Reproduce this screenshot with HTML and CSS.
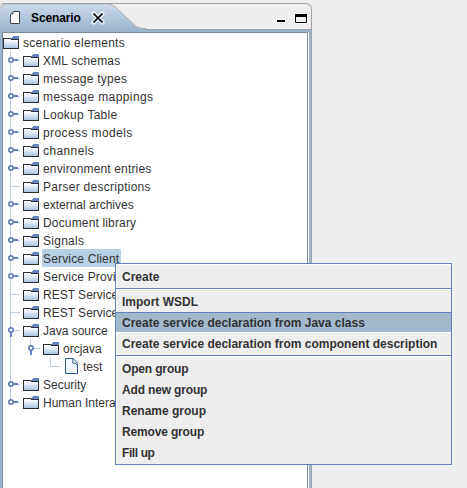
FILE: index.html
```
<!DOCTYPE html>
<html lang="en">
<head>
<meta charset="utf-8">
<title>Scenario</title>
<link rel="stylesheet" href="styles.css">
</head>
<body>
<svg class="defs" width="0" height="0">
  <defs>
    <linearGradient id="folderFill" gradientUnits="userSpaceOnUse" x1="0" y1="5" x2="0" y2="15"><stop offset="0" stop-color="#fff"/><stop offset=".3" stop-color="#f4f8fc"/><stop offset="1" stop-color="#a9c4df"/></linearGradient>
    <linearGradient id="tabFill" x1="0" y1="0" x2="0" y2="1"><stop offset="0" stop-color="#cddaea"/><stop offset="1" stop-color="#9ab4d0"/></linearGradient>
    <symbol id="folder" viewBox="0 0 16 18">
      <path d="M0 5h8v1h7v10H0z" fill="url(#folderFill)"/>
      <path d="M0 5.500h8M8 6.500h8M.5 5v11M0 15.500h16M15.500 6v10" fill="none" stroke="#2b2b30"/>
      <path d="M8 6V5h1V4h1V3h6v3z" fill="#6382bf"/>
      <path d="M8 6.500h8" stroke="#2b2b30"/>
    </symbol>
    <symbol id="closed" viewBox="0 0 20 18">
      <path d="M7.500 0v18M8 9.500h9" stroke="#b8cfe5"/>
      <path d="M9 9h6" stroke="#6382bf" stroke-width="2"/>
      <circle cx="8" cy="9" r="2.200" fill="#fff" stroke="#6382bf" stroke-width="1.700"/>
    </symbol>
    <symbol id="open" viewBox="0 0 20 18">
      <path d="M7.500 0v18M8 9.500h9" stroke="#b8cfe5"/>
      <path d="M8 10v6" stroke="#6382bf" stroke-width="2"/>
      <circle cx="8" cy="9" r="2.200" fill="#fff" stroke="#6382bf" stroke-width="1.700"/>
    </symbol>
    <symbol id="openlast" viewBox="0 0 20 18">
      <path d="M7.500 0v9M8 9.500h9" stroke="#b8cfe5"/>
      <path d="M8 10v6" stroke="#6382bf" stroke-width="2"/>
      <circle cx="8" cy="9" r="2.200" fill="#fff" stroke="#6382bf" stroke-width="1.700"/>
    </symbol>
    <symbol id="last" viewBox="0 0 20 18">
      <path d="M7.500 0v9M8 9.500h9" stroke="#b8cfe5"/>
      <path d="M9 9h6" stroke="#6382bf" stroke-width="2"/>
      <circle cx="8" cy="9" r="2.200" fill="#fff" stroke="#6382bf" stroke-width="1.700"/>
    </symbol>
    <symbol id="leaf" viewBox="0 0 20 18"><path d="M7.500 0v18M8 9.500h9" stroke="#b8cfe5"/></symbol>
    <symbol id="elbow" viewBox="0 0 20 18"><path d="M7.500 0v9.500h9.500" fill="none" stroke="#b8cfe5"/></symbol>
    <symbol id="line" viewBox="0 0 20 18"><path d="M7.500 0v18" stroke="#b8cfe5"/></symbol>
  </defs>
</svg>
<section class="panel">
  <header class="bar">
    <div class="tab">
      <svg class="tab-shape" width="146" height="27" viewBox="0 0 146 27"><path d="M0 27V5L4 1h102c6 0 9 3 14 8l13 12c3 3 5 5 13 5v1z" fill="url(#tabFill)"/><path d="M0 5.500L4.500 .8H106c6 0 9 2.700 14 7.700l13 12c3 3 5 5 13 5" fill="none" stroke="#a3a3a3"/></svg>
      <svg class="doc" width="10" height="13" viewBox="0 0 10 13"><path d="M3.500 .5h6v12h-9v-9z" fill="#fff" stroke="#444"/><path d="M.5 3.500h3v-3z" fill="#777"/></svg>
      <span class="title">Scenario</span>
      <svg class="close" width="14" height="14" viewBox="0 0 14 14"><path d="M2.500 2.500l9 9M11.500 2.500l-9 9" stroke="#e4ecf5" stroke-width="4.500" stroke-linecap="round"/><path d="M2.500 2.500l9 9M11.500 2.500l-9 9" stroke="#000" stroke-width="1.700"/></svg>
    </div>
    <svg class="controls" width="34" height="14" viewBox="0 0 34 14"><path d="M1 6h10v4H1zM19 0h14v11H19z" fill="#f9f9f9"/><path d="M2 7h8v2H2z"/><path d="M20.500 1.500h11v8h-11z" fill="#f0f2f4" stroke="#000"/><path d="M20 1h12v3H20z"/></svg>
  </header>
  <div class="frame">
    <div class="tree">
      <div class="row"><svg class="folder"><use href="#folder"/></svg><span class="label wide">scenario elements</span></div>
      <div class="row"><svg class="guide"><use href="#closed"/></svg><svg class="folder"><use href="#folder"/></svg><span class="label loose">XML schemas</span></div>
      <div class="row"><svg class="guide"><use href="#closed"/></svg><svg class="folder"><use href="#folder"/></svg><span class="label wide">message types</span></div>
      <div class="row"><svg class="guide"><use href="#closed"/></svg><svg class="folder"><use href="#folder"/></svg><span class="label widest">message mappings</span></div>
      <div class="row"><svg class="guide"><use href="#closed"/></svg><svg class="folder"><use href="#folder"/></svg><span class="label wide">Lookup Table</span></div>
      <div class="row"><svg class="guide"><use href="#closed"/></svg><svg class="folder"><use href="#folder"/></svg><span class="label widest">process models</span></div>
      <div class="row"><svg class="guide"><use href="#closed"/></svg><svg class="folder"><use href="#folder"/></svg><span class="label widest">channels</span></div>
      <div class="row"><svg class="guide"><use href="#closed"/></svg><svg class="folder"><use href="#folder"/></svg><span class="label loose">environment entries</span></div>
      <div class="row"><svg class="guide"><use href="#leaf"/></svg><svg class="folder"><use href="#folder"/></svg><span class="label wide">Parser descriptions</span></div>
      <div class="row"><svg class="guide"><use href="#closed"/></svg><svg class="folder"><use href="#folder"/></svg><span class="label">external archives</span></div>
      <div class="row"><svg class="guide"><use href="#closed"/></svg><svg class="folder"><use href="#folder"/></svg><span class="label loose">Document library</span></div>
      <div class="row"><svg class="guide"><use href="#closed"/></svg><svg class="folder"><use href="#folder"/></svg><span class="label wide">Signals</span></div>
      <div class="row"><svg class="guide"><use href="#closed"/></svg><svg class="folder"><use href="#folder"/></svg><span class="label loose selected">Service Client</span></div>
      <div class="row"><svg class="guide"><use href="#closed"/></svg><svg class="folder"><use href="#folder"/></svg><span class="label loose">Service Provi</span></div>
      <div class="row"><svg class="guide"><use href="#leaf"/></svg><svg class="folder"><use href="#folder"/></svg><span class="label">REST Service</span></div>
      <div class="row"><svg class="guide"><use href="#leaf"/></svg><svg class="folder"><use href="#folder"/></svg><span class="label">REST Service</span></div>
      <div class="row"><svg class="guide"><use href="#open"/></svg><svg class="folder"><use href="#folder"/></svg><span class="label">Java source</span></div>
      <div class="row"><svg class="guide"><use href="#line"/></svg><svg class="guide"><use href="#openlast"/></svg><svg class="folder"><use href="#folder"/></svg><span class="label">orcjava</span></div>
      <div class="row"><svg class="guide"><use href="#line"/></svg><svg class="guide"></svg><svg class="guide"><use href="#elbow"/></svg><svg class="file" viewBox="0 0 16 18"><path d="M2.500 1.500h8l4 5v10h-12z" fill="#f0f6fc" stroke="#2f5b88"/><path d="M9.500 1.500q1 3 0 4.500 3-.5 5 2" fill="#fff" stroke="#2f5b88"/></svg><span class="label">test</span></div>
      <div class="row"><svg class="guide"><use href="#closed"/></svg><svg class="folder"><use href="#folder"/></svg><span class="label">Security</span></div>
      <div class="row"><svg class="guide"><use href="#last"/></svg><svg class="folder"><use href="#folder"/></svg><span class="label">Human Intera</span></div>
    </div>
  </div>
</section>
<nav class="menu">
  <div class="item">Create</div>
  <div class="sep"></div>
  <div class="item">Import WSDL</div>
  <div class="item active">Create service declaration from Java class</div>
  <div class="item">Create service declaration from component description</div>
  <div class="sep"></div>
  <div class="item tight">Open group</div>
  <div class="item tight">Add new group</div>
  <div class="item">Rename group</div>
  <div class="item tight">Remove group</div>
  <div class="item tighter">Fill up</div>
</nav>
</body>
</html>
```
FILE: styles.css
```
* { box-sizing: border-box; }
html, body { height: 100%; }
body {
  margin: 0;
  overflow: hidden;
  background: #eee;
  color: #333;
  font: 12px "Liberation Sans", Arial, sans-serif;
}
svg { display: block; flex: none; }
.defs { position: absolute; }
.panel {
  display: flex;
  flex-direction: column;
  width: 312px;
  height: 100%;
  padding-top: 3px;
}
.bar {
  display: flex;
  flex: none;
  justify-content: space-between;
  height: 27px;
  border: 1px solid #a3a3a3;
  border-left: 0;
  border-radius: 4px 6px 0 0;
}
.tab {
  position: relative;
  display: flex;
  align-items: center;
  height: 27px;
  margin-top: -1px;
  padding: 2px 0 0 10px;
}
.tab-shape { position: absolute; left: 0; top: 0; }
.doc, .title, .close { position: relative; }
.title { margin-left: 11px; color: #000; font-weight: bold; letter-spacing: -.12px; }
.close { margin-left: 10px; }
.controls { margin: 9px 2px 0 0; }
.frame {
  flex: 1;
  min-height: 0;
  padding: 2px 2px 0;
  border-right: 1px solid #a3a3a3;
  background: #9ab4d0;
}
.tree {
  height: 100%;
  overflow: hidden;
  background: #fff;
  border: 1px solid #7a8a99;
  border-bottom: 0;
  box-shadow: 1px 0 #fff;
  margin-right: 1px;
}
.row { display: flex; height: 18px; }
.guide { width: 20px; height: 18px; }
.folder, .file { width: 16px; height: 18px; }
.label {
  height: 18px;
  margin-left: 3px;
  padding: 0 2px 0 1px;
  line-height: 20px;
  white-space: nowrap;
}
.loose { letter-spacing: .16px; }
.wide { letter-spacing: .27px; }
.widest { letter-spacing: .4px; }
.selected { background: #b8cfe5; }
.menu {
  position: absolute;
  left: 115px;
  top: 263px;
  width: 337px;
  height: 202px;
  padding-top: 2px;
  background: #eee;
  border: 1px solid #6382bf;
  box-shadow: inset 1px 1px #fff;
  font-weight: bold;
}
.item {
  height: 21px;
  padding-left: 6px;
  line-height: 22px;
  white-space: nowrap;
}
.item:first-child { margin-top: -1px; height: 22px; line-height: 24px; }
.active {
  background: #a3b8cc;
  border-top: 1px solid #6382bf;
  border-bottom: 1px solid #fff;
  line-height: 20px;
}
.tight { letter-spacing: -.16px; }
.tighter { letter-spacing: -.4px; }
.sep {
  height: 2px;
  margin: 1px 0;
  background: #fff;
  border-top: 1px solid #6382bf;
}
```
